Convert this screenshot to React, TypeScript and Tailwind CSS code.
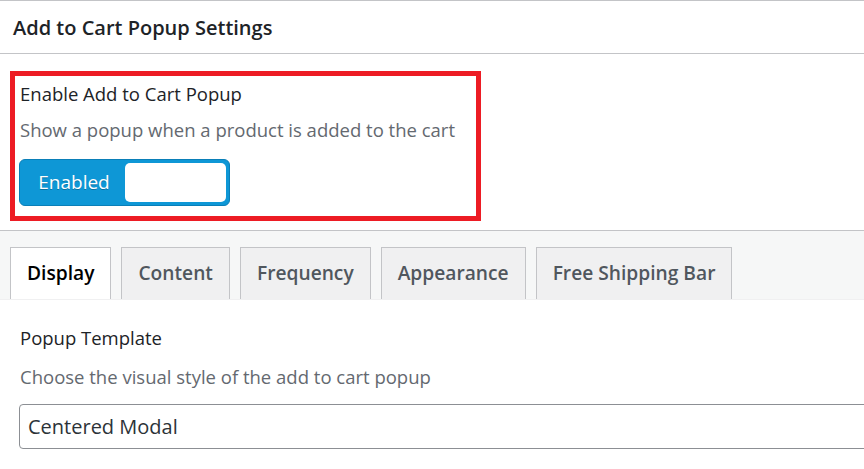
const font = { fontFamily: '"Open Sans", "Noto Sans", sans-serif' };

const tabs = ['Display', 'Content', 'Frequency', 'Appearance', 'Free Shipping Bar'];

export default function App() {
  return (
    <div
      className="w-[864px] h-[469px] overflow-hidden bg-white border-t border-[#c3c4c7]"
      style={font}
    >
      {/* header */}
      <div className="h-[53px] px-[13px] pt-px flex items-center border-b border-[#c3c4c7]">
        <h2 className="text-[20px] font-semibold text-[#1d2327]">Add to Cart Popup Settings</h2>
      </div>

      {/* enable toggle section */}
      <div className="pt-[17px] pb-[9px] px-[10px] border-b border-[#c3c4c7]">
        <div className="w-[471px] h-[150px] border-[5px] border-[#ed1c24] px-[5px] pt-[5px]">
          <div className="text-[18.5px] leading-[26px] text-[#1d2327]">Enable Add to Cart Popup</div>
          <div className="mt-[10px] text-[18.5px] leading-[26px] text-[#646970]">
            Show a popup when a product is added to the cart
          </div>
          <div className="mt-[16px] -ml-px w-[211px] h-[47px] rounded-[6px] bg-[#0e97d6] border border-[#0a7fb8] flex items-center p-[3px]">
            <span className="w-[102px] text-center text-[19px] text-white [text-shadow:0_1px_0_rgba(0,0,0,0.25)]">
              Enabled
            </span>
            <span className="flex-1 h-full bg-white rounded-[5px]" />
          </div>
        </div>
      </div>

      {/* tabs */}
      <div className="bg-[#f6f7f7] pt-[16px] px-[10px] flex gap-[10px] border-b border-[#f0f0f1]">
        {tabs.map((t, i) => (
          <div
            key={t}
            className={
              i === 0
                ? 'h-[52px] px-[16px] flex items-center border border-b-0 border-[#c3c4c7] bg-white text-[19.2px] font-semibold text-black -mb-px'
                : 'h-[52px] px-[16px] flex items-center border border-b-0 border-[#c3c4c7] bg-[#f0f0f1] text-[19.2px] font-semibold text-[#50575e]'
            }
          >
            {t}
          </div>
        ))}
      </div>

      {/* panel */}
      <div className="px-[20px] pt-[25px]">
        <div className="text-[18.5px] leading-[26px] text-[#1d2327]">Popup Template</div>
        <div className="mt-[13px] text-[18.5px] leading-[26px] text-[#646970]">
          Choose the visual style of the add to cart popup
        </div>
        <div className="mt-[14px] -ml-px w-[860px] h-[45px] border border-[#8c8f94] rounded-[4px] flex items-center px-[8px] text-[20px] text-[#2c3338]">
          Centered Modal
        </div>
      </div>
    </div>
  );
}
